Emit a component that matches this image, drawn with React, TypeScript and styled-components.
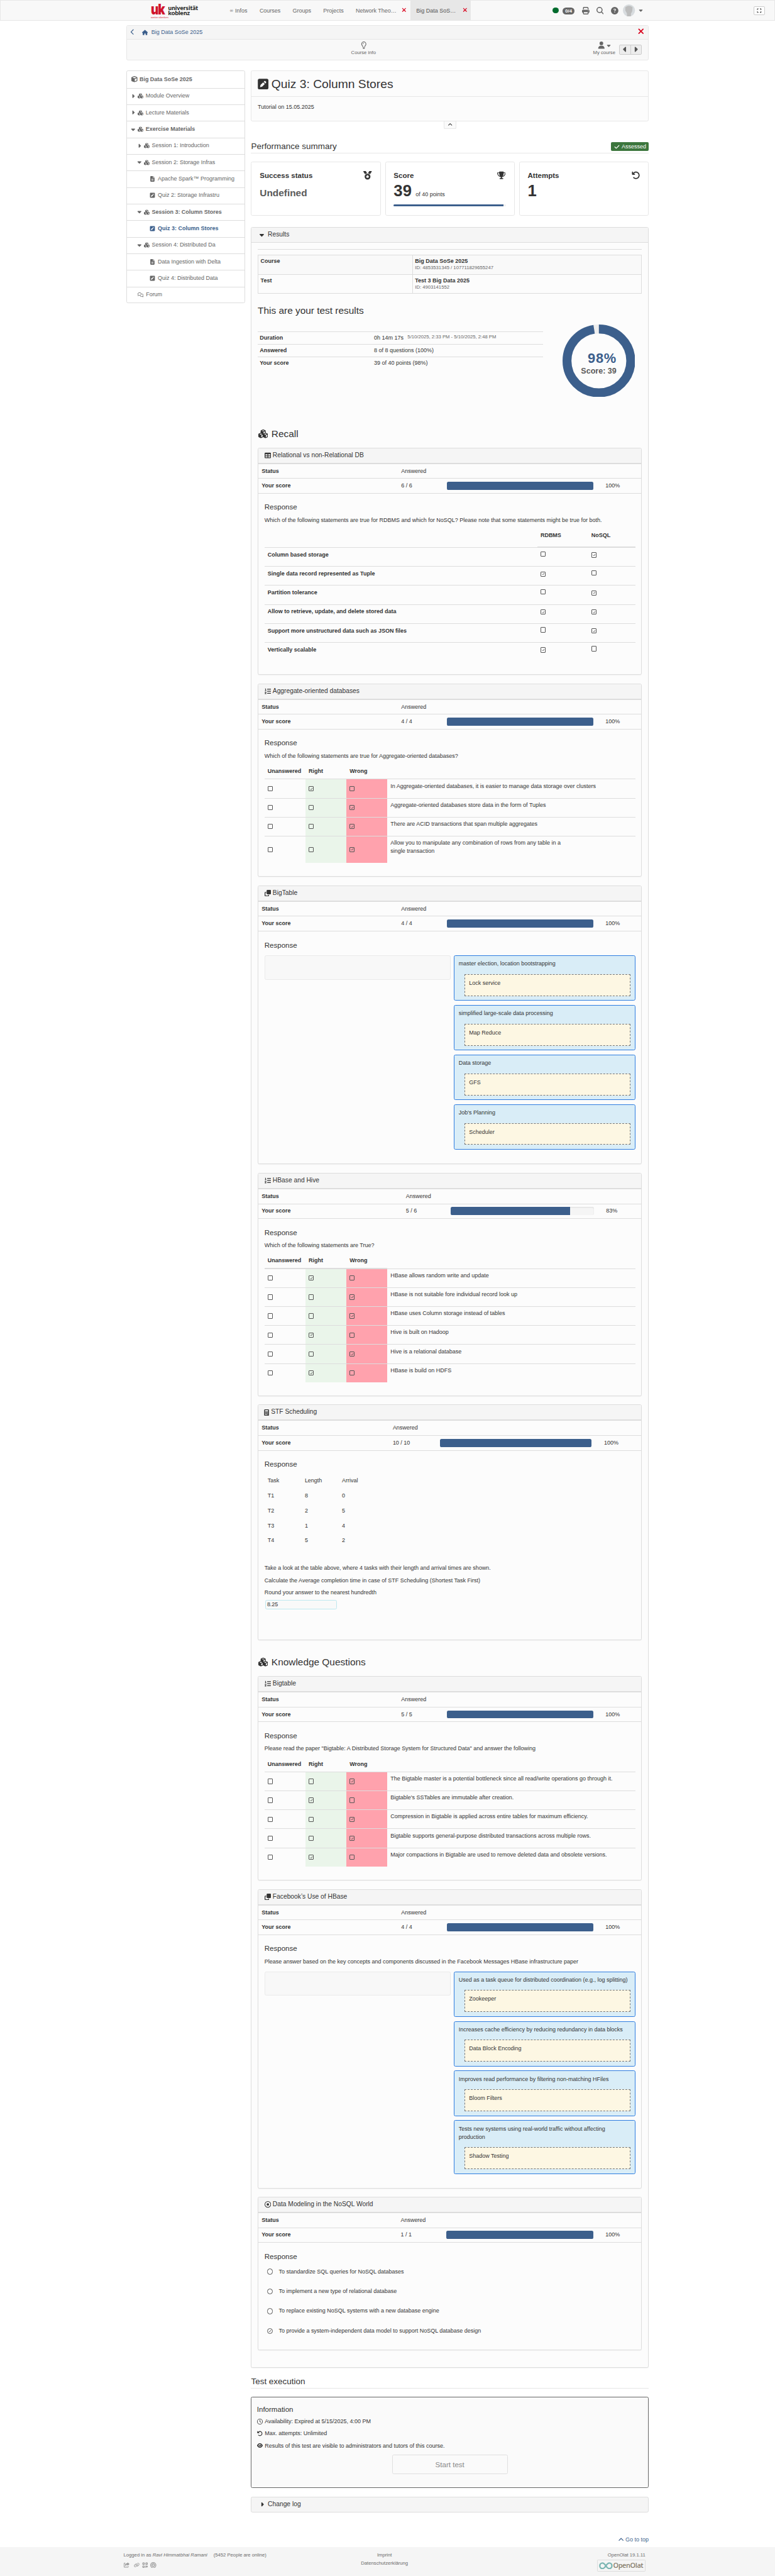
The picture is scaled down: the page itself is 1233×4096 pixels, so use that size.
import React from 'react';
import styled, { createGlobalStyle, css } from 'styled-components';
import {
  FaAngleUp, FaArrowRotateLeft, FaBullseye, FaCalculator, FaCaretDown, FaCaretLeft, FaCaretRight,
  FaCheck, FaChevronLeft, FaCircleQuestion, FaClone, FaCube, FaCubes, FaExpand, FaEye, FaFileLines,
  FaHouse, FaLink, FaListOl, FaMagnifyingGlass, FaMedal, FaPrint, FaQrcode, FaRegCircleDot,
  FaRegClock, FaRegComments, FaRegLightbulb, FaShareFromSquare, FaSquarePen, FaTable, FaTrophy,
  FaUser, FaXmark,
} from 'react-icons/fa6';

/* 1rem stands for ten layout units; every size below is written in rem. */
const Global = createGlobalStyle`
  html { font-size: 6.4219px; }
  *, *::before, *::after { box-sizing: border-box; }
  body {
    margin: 0;
    background: #fff;
    color: #333;
    font: 1.4rem/2rem "Liberation Sans", Arial, sans-serif;
    overflow-x: hidden;
  }
  h1, h2, h3, h4, p { margin: 0; font-weight: 400; }
`;

const c = {
  text: '#333',
  muted: '#666',
  link: '#3c5f8c',
  line: '#ddd',
  soft: '#e7e7e7',
  head: '#f5f5f5',
  red: '#d9001b',
};

const Ico = styled.span<{ $s?: number; $w?: number; $c?: string; $mr?: number }>`
  display: inline-flex;
  flex: none;
  justify-content: center;
  align-items: center;
  width: ${p => (p.$w ?? p.$s ?? 14) / 10}rem;
  margin-right: ${p => (p.$mr ?? 0) / 10}rem;
  color: ${p => p.$c ?? 'inherit'};
  svg { display: block; flex: none; width: auto; height: ${p => (p.$s ?? 14) / 10}rem; }
`;

/* ---------- top bar ---------- */
const Page = styled.div`
  display: flex;
  flex-direction: column;
  min-height: 4096px;
`;
const TopBar = styled.header`
  display: flex;
  flex: none;
  height: 5.2rem;
  background: #f8f8f8;
  border: 1px solid ${c.soft};
`;
const Brand = styled.div`
  display: flex;
  width: 55.3rem;
  padding: 0.9rem 0 0 37.2rem;
`;
const BrandMark = styled.div`
  width: 4.3rem;
  color: #d0142c;
`;
const BrandUk = styled.div`
  height: 2.8rem;
  font: 900 3.6rem/2.7rem Inter, sans-serif;
  letter-spacing: -0.2rem;
  transform: scaleX(0.82);
  transform-origin: left;
`;
const BrandClaim = styled.div`
  font: 400 0.66rem/0.7rem "Open Sans", sans-serif;
  white-space: nowrap;
`;
const BrandName = styled.div`
  padding-top: 0.2rem;
  color: #1d1d1b;
  font: 900 1.55rem/1.25rem Lato, sans-serif;
  white-space: nowrap;
`;
const NavItem = styled.a<{ $w: number; $active?: boolean }>`
  display: flex;
  align-items: center;
  width: ${p => p.$w / 10}rem;
  padding: 0.2rem 1rem 0 1.5rem;
  white-space: nowrap;
  color: ${p => (p.$active ? '#555' : '#666')};
  background: ${p => (p.$active ? c.soft : 'transparent')};
`;
const Infinity = styled.span`
  width: 1.3rem;
  font-size: 1.1rem;
`;
const TabClose = styled.span`
  margin-left: auto;
  color: ${c.red};
`;
const Tools = styled.div`
  display: flex;
  align-items: center;
  margin-left: 20.3rem;
  color: #666;
`;
const Online = styled.span`
  width: 1.45rem;
  height: 1.45rem;
  margin-right: 1rem;
  border-radius: 50%;
  background: #006b2d;
`;
const Count = styled.span`
  width: 2.95rem;
  height: 1.8rem;
  margin: 0.3rem 1.9rem 0 0;
  border-radius: 0.9rem;
  background: #666;
  color: #fff;
  font-size: 1.2rem;
  font-weight: 700;
  line-height: 1.8rem;
  text-align: center;
`;
const Avatar = styled.span`
  width: 3rem;
  height: 3rem;
  margin: 0 0.9rem 0 1.1rem;
  svg { display: block; width: 100%; height: 100%; }
`;
const Expand = styled.button`
  display: flex;
  align-items: center;
  justify-content: center;
  width: 2.7rem;
  height: 2.2rem;
  margin: 1.4rem 2.4rem 0 auto;
  padding: 0;
  border: 1px solid #ccc;
  border-radius: 0.3rem;
  background: #fff;
  color: ${c.text};
`;

/* ---------- breadcrumb and course tools ---------- */
const Container = styled.div`
  width: 129.4rem;
  margin: 1rem 0 0 31.3rem;
`;
const CourseBar = styled.section`
  height: 8.7rem;
  border: 1px solid ${c.soft};
  border-radius: 0.4rem;
  background: #f8f8f8;
`;
const Crumbs = styled.div`
  display: flex;
  align-items: center;
  height: 3.4rem;
  padding: 0 1.1rem 0 0.8rem;
  border-bottom: 1px solid ${c.soft};
  background: ${c.head};
  color: ${c.link};
`;
const CourseTools = styled.div`
  display: grid;
  grid-template-columns: 1fr auto 1fr;
  height: 5.1rem;
  padding-left: 1.1rem;
`;
const Tool = styled.div`
  display: flex;
  flex-direction: column;
  align-items: center;
  grid-column: 2;
  margin-left: -13rem;
  padding-top: 0.6rem;
  color: #666;
  font-size: 1.2rem;
  line-height: 1.8rem;
`;
const MyTools = styled.div`
  display: flex;
  grid-column: 3;
  justify-content: flex-end;
  padding: 0 1.6rem 0 0;
`;
const MyCourse = styled(Tool)`
  margin: 0 1rem 0 0;
`;
const IconPair = styled.span`
  display: flex;
  align-items: center;
  gap: 0.5rem;
`;
const Pager = styled.div`
  display: flex;
  width: 5.5rem;
  height: 2.5rem;
  margin-top: 1.25rem;
  border: 1px solid #ccc;
  border-radius: 0.3rem;
  background: #ededed;
  color: #555;
`;
const PagerHalf = styled.span<{ $split?: boolean }>`
  display: flex;
  flex: 1;
  align-items: center;
  justify-content: center;
  border-left: ${p => (p.$split ? '1px solid #ccc' : '0')};
`;

/* ---------- side menu ---------- */
const Columns = styled.div`
  display: flex;
  gap: 1.5rem;
  margin-top: 2.6rem;
  align-items: flex-start;
`;
const Menu = styled.nav`
  width: 29.4rem;
  height: 57.5rem;
  border: 1px solid ${c.line};
  border-radius: 0.4rem;
  background: #fff;
`;
const MenuRow = styled.a<{ $indent: number; $bold?: boolean; $active?: boolean }>`
  display: flex;
  align-items: center;
  height: 4.1rem;
  padding: 0 0 0.15rem ${p => p.$indent / 10}rem;
  white-space: nowrap;
  color: ${p => (p.$active ? c.link : c.muted)};
  font-weight: ${p => (p.$bold ? 700 : 400)};
  & + & { border-top: 1px solid ${c.line}; }
`;

/* ---------- main column ---------- */
const Main = styled.main`
  width: 98.5rem;
`;
const TitleCard = styled.section`
  height: 12.5rem;
  border: 1px solid ${c.soft};
  border-radius: 0.4rem;
  background: #fcfcfc;
`;
const TitleRow = styled.div`
  display: flex;
  align-items: center;
  height: 6.35rem;
  padding-left: 1.45rem;
  border-bottom: 1px solid ${c.soft};
`;
const Title = styled.h1`
  font-size: 3rem;
  line-height: 3.3rem;
`;
const Intro = styled.p`
  padding: 1.6rem 1.5rem;
`;
const Fold = styled.button`
  display: flex;
  align-items: center;
  justify-content: center;
  width: 3.15rem;
  height: 2rem;
  margin: 0 auto;
  padding: 0;
  border: 1px solid ${c.soft};
  border-top: 0;
  border-radius: 0 0 0.4rem 0.4rem;
  background: #fafafa;
  color: ${c.text};
`;
const SectionHead = styled.div<{ $mt: number }>`
  display: flex;
  justify-content: space-between;
  align-items: flex-start;
  height: 2.9rem;
  margin-top: ${p => p.$mt / 10}rem;
  padding-top: 0.1rem;
  border-bottom: 1px solid ${c.soft};
`;
const SectionTitle = styled.h3`
  font-size: 2.1rem;
  line-height: 2.3rem;
`;
const Assessed = styled.span`
  display: flex;
  align-items: center;
  width: 9.3rem;
  height: 2.2rem;
  margin-top: 0.1rem;
  padding-left: 0.8rem;
  border-radius: 0.3rem;
  background: #3c763d;
  color: #fff;
`;
const Cards = styled.div`
  display: grid;
  grid-template-columns: repeat(3, 1fr);
  gap: 1.05rem;
  margin-top: 2.05rem;
`;
const Card = styled.div`
  height: 13.4rem;
  padding: 1.9rem 2rem 0;
  border: 1px solid ${c.soft};
  border-radius: 0.4rem;
  background: #fff;
`;
const CardHead = styled.div`
  display: flex;
  align-items: center;
  justify-content: space-between;
  height: 2.5rem;
  padding-top: 0.3rem;
  font-size: 1.8rem;
  font-weight: 700;
`;
const CardValue = styled.div<{ $size: number; $c?: string }>`
  display: flex;
  align-items: baseline;
  gap: 1rem;
  height: 4.8rem;
  padding-top: ${p => (4.4 - p.$size * 0.1 * 0.98)}rem;
  color: ${p => p.$c ?? c.text};
  font-size: ${p => p.$size / 10}rem;
  line-height: 1.1;
  font-weight: 700;
`;
const CardUnit = styled.span`
  font-size: 1.4rem;
  font-weight: 400;
`;
const MiniTrack = styled.div`
  height: 0.5rem;
  margin-top: 1.2rem;
  border-radius: 0.3rem;
  background: #f0f0f0;
  overflow: hidden;
`;
const Fill = styled.div`
  height: 100%;
  background: ${c.link};
`;

const Panel = styled.section<{ $h: number; $mt?: number }>`
  height: ${p => p.$h / 10}rem;
  margin-top: ${p => (p.$mt ?? 0) / 10}rem;
  border: 1px solid ${c.line};
  border-radius: 0.4rem;
  background: #fcfcfc;
  box-shadow: 0 1px 1px rgba(0, 0, 0, 0.04);
`;
const PanelHead = styled.h4<{ $inset?: number }>`
  display: flex;
  align-items: center;
  height: 3.75rem;
  padding: 0 ${p => (p.$inset ?? 20) / 10}rem;
  border-bottom: 1px solid ${c.line};
  border-radius: 0.3rem 0.3rem 0 0;
  background: ${c.head};
  font-size: 1.6rem;
`;
const ResultsBody = styled.div`
  padding: 1.49rem 1.5rem 0;
`;
const Rule = styled.div`
  height: 1px;
  background: ${c.line};
`;
const Meta = styled.div`
  height: 9.67rem;
  margin-top: 1.29rem;
  border: 1px solid ${c.line};
`;
const MetaRow = styled.div<{ $shade?: boolean }>`
  display: grid;
  grid-template-columns: 38.1rem 1fr;
  height: 50%;
  background: ${p => (p.$shade ? '#f9f9f9' : '#fcfcfc')};
  & + & { border-top: 1px solid ${c.line}; }
`;
const MetaCell = styled.div<{ $split?: boolean }>`
  display: flex;
  flex-direction: column;
  padding: 0.45rem 0.55rem;
  border-left: ${p => (p.$split ? `1px solid ${c.line}` : '0')};
  font-weight: 700;
  line-height: 1.9rem;
`;
const Small = styled.small`
  color: #666;
  font-size: 1.2rem;
  font-weight: 400;
  line-height: 1.5rem;
`;
const BigHead = styled.h3<{ $mt: number; $mb: number }>`
  display: flex;
  align-items: center;
  height: 2.65rem;
  margin: ${p => p.$mt / 10}rem 0 ${p => p.$mb / 10}rem;
  font-size: 2.4rem;
  line-height: 2.65rem;
`;
const Overview = styled.div`
  display: flex;
  justify-content: space-between;
  height: 18rem;
  padding-right: 1.75rem;
`;
const Facts = styled.div`
  width: 70.7rem;
  padding-top: 1.8rem;
`;
const FactRow = styled.div`
  display: grid;
  grid-template-columns: 28.3rem 1fr;
  height: 3.1rem;
  padding: 0.45rem 0.5rem;
  border-top: 1px solid ${c.line};
`;
const FactTime = styled(Small)`
  margin-left: 1rem;
  line-height: 1rem;
  vertical-align: 0.25rem;
`;
const Donut = styled.svg`
  width: 18rem;
  height: 18rem;
  font-family: "Liberation Sans", Arial, sans-serif;
`;

/* ---------- question panels ---------- */
const ScoreRow = styled.div<{ $col: number; $bar: number; $pct: number; $last?: boolean }>`
  display: grid;
  grid-template-columns: ${p => p.$col / 10}rem ${p => (p.$bar - p.$col) / 10}rem ${p => (p.$pct - p.$bar) / 10}rem 1fr;
  align-items: center;
  height: 3.7rem;
  padding: 0 0 0 0.8rem;
  border-top: 1px solid ${c.line};
  ${p => p.$last && css`
    height: 3.8rem;
    border-bottom: 1px solid ${c.line};
  `}
`;
const Track = styled.div<{ $w: number }>`
  width: ${p => p.$w / 10}rem;
  height: 2rem;
  border-radius: 0.4rem;
  background: #f5f5f5;
  box-shadow: inset 0 1px 2px rgba(0, 0, 0, 0.1);
  overflow: hidden;
`;
const Answer = styled.div`
  padding: 2.45rem 1.5rem 0;
`;
const AnswerTitle = styled.h4`
  height: 2rem;
  margin-bottom: 1.15rem;
  font-size: 1.8rem;
`;
const Prompt = styled.p`
  height: 2rem;
  margin-bottom: 1rem;
  white-space: nowrap;
`;
const MatrixRow = styled.div<{ $head?: boolean }>`
  display: grid;
  grid-template-columns: 67.6rem 12.6rem 1fr;
  height: 4.7rem;
  font-weight: 700;
  border-top: ${p => (p.$head ? '0' : `1px solid ${c.line}`)};
`;
const MatrixCell = styled.div<{ $thick?: boolean }>`
  padding: 0.75rem 0.8rem;
  border-bottom: ${p => (p.$thick ? `1px solid ${c.line}` : '0')};
`;
const KprimHead = styled.div`
  display: grid;
  grid-template-columns: repeat(3, 10.15rem) 1fr;
  height: 3.65rem;
  font-weight: 700;
`;
const KprimHeadCell = styled.div`
  padding: 0.8rem;
  border-bottom: 1px solid ${c.line};
`;
const KprimRow = styled.div<{ $tall?: boolean }>`
  display: grid;
  grid-template-columns: repeat(3, 10.15rem) 1fr;
  height: ${p => (p.$tall ? 6.7 : 4.7)}rem;
  border-top: 1px solid ${c.line};
`;
const KprimCell = styled.div<{ $bg?: string }>`
  display: flex;
  align-items: center;
  padding-left: 0.8rem;
  background: ${p => p.$bg ?? 'transparent'};
`;
const KprimText = styled.div`
  padding: 0.65rem 0.8rem;
  white-space: pre-line;
`;
const BoxMark = styled.span<{ $round?: boolean }>`
  display: inline-flex;
  flex: none;
  align-items: center;
  justify-content: center;
  width: ${p => (p.$round ? 1.45 : 1.3)}rem;
  height: ${p => (p.$round ? 1.45 : 1.3)}rem;
  border: 1px solid #555;
  border-radius: ${p => (p.$round ? '50%' : '1px')};
  color: #444;
  svg { display: block; width: 0.75rem; height: 0.75rem; }
`;
const Match = styled.div<{ $mt: number }>`
  display: flex;
  justify-content: space-between;
  align-items: flex-start;
  margin-top: ${p => p.$mt / 10}rem;
`;
const Source = styled.div`
  width: 46.1rem;
  height: 6rem;
  border: 1px solid #eaeaea;
  border-radius: 0.4rem;
  background: #f8f8f8;
`;
const Targets = styled.div`
  display: flex;
  flex-direction: column;
  gap: 1.05rem;
  width: 44.9rem;
`;
const Target = styled.div<{ $tall?: boolean }>`
  height: ${p => (p.$tall ? 13.25 : 11.25)}rem;
  padding: 1rem 1rem 0 1rem;
  border: 0.2rem solid #2e7de0;
  border-radius: 0.4rem;
  background: #d9edf7;
  white-space: pre-line;
`;
const Dropped = styled.div`
  height: 5.4rem;
  margin: 1.5rem 0 0 1.5rem;
  padding: 1.05rem 0.9rem;
  border: 0.2rem dashed #777;
  background: #fdf7e3;
`;
const Grid3 = styled.div`
  display: grid;
  grid-template-columns: repeat(3, 9.2rem);
  grid-auto-rows: 3.72rem;
  margin-bottom: 3.15rem;
  padding: 0.85rem 0 0 0.8rem;
`;
const Line = styled.p`
  height: 3rem;
`;
const Field = styled.div`
  width: 17.8rem;
  height: 2.4rem;
  margin: -0.2rem 0 0 0.2rem;
  padding-left: 0.3rem;
  border: 1px solid #bfe8ef;
  border-radius: 0.4rem;
  background: #f9f9f9;
`;
const Options = styled.div`
  padding-top: 0.55rem;
`;
const Option = styled.div`
  display: flex;
  align-items: center;
  gap: 1.45rem;
  height: 2rem;
  margin-bottom: 2.9rem;
  padding-left: 0.65rem;
`;

/* ---------- execution, log, footer ---------- */
const InfoBox = styled.section`
  height: 22.65rem;
  margin-top: 2.05rem;
  padding: 2rem 1.3rem;
  border: 1px solid #666;
  border-radius: 0.4rem;
  background: #fafafa;
`;
const InfoTitle = styled.h4`
  height: 3rem;
  font-size: 1.8rem;
`;
const InfoLine = styled.p`
  display: flex;
  align-items: center;
  height: 2rem;
  margin-bottom: 1rem;
`;
const Start = styled.button`
  display: block;
  width: 28.7rem;
  height: 4.8rem;
  margin: 1.2rem auto 0;
  border: 1px solid #e0e0e0;
  border-radius: 0.4rem;
  background: #fafafa;
  color: #888;
  font: 1.8rem "Liberation Sans", Arial, sans-serif;
`;
const ChangeLog = styled.section`
  display: flex;
  align-items: center;
  height: 4rem;
  margin-top: 2.05rem;
  padding-left: 2.1rem;
  border: 1px solid ${c.line};
  border-radius: 0.4rem;
  background: ${c.head};
  font-size: 1.6rem;
`;
const GoTop = styled.a`
  display: flex;
  align-items: center;
  justify-content: flex-end;
  height: 2rem;
  margin: 5.7rem 0 0.9rem;
  color: ${c.link};
`;
const Footer = styled.footer`
  display: grid;
  grid-template-columns: 1fr auto 1fr;
  flex: 1;
  padding: 0.9rem 32.1rem 0 30.6rem;
  background: ${c.head};
  color: #6b6b6b;
  font-size: 1.2rem;
`;
const FootRight = styled.div`
  display: flex;
  flex-direction: column;
  align-items: flex-end;
  padding-top: 0.1rem;
`;
const FootMid = styled.div`
  padding-top: 0.2rem;
  text-align: center;
`;
const FootLeft = styled.div`
  padding-top: 0.2rem;
  em { margin-right: 1.2rem; }
`;
const Social = styled.div`
  display: flex;
  align-items: center;
  height: 1.8rem;
  margin-top: 0.4rem;
  color: #999;
`;
const OlatLogo = styled.span`
  display: flex;
  align-items: center;
  justify-content: space-between;
  width: 12rem;
  height: 3rem;
  padding: 0 0.4rem;
  border: 1px solid ${c.line};
  border-radius: 0.2rem;
  color: #857c6b;
  font: 600 1.7rem/2.8rem "Open Sans", sans-serif;
  letter-spacing: -0.06rem;
  svg { width: 3.4rem; height: 1.8rem; }
`;

/* ---------- pieces ---------- */
const Check = () => (
  <svg viewBox="0 0 10 10"><path d="M1.5 5.5 4 8 8.7 1.8" fill="none" stroke="currentColor" strokeWidth="1.7" /></svg>
);
const Box = ({ on, round }: { on?: boolean; round?: boolean }) => (
  <BoxMark $round={round}>{on && <Check />}</BoxMark>
);

type QProps = {
  icon: React.ReactNode;
  iconW?: number;
  title: string;
  score: string;
  pct?: number;
  h: number;
  mt?: number;
  cols?: [number, number, number];
  barW?: number;
  children: React.ReactNode;
};
const Question = ({ icon, iconW = 16, title, score, pct = 100, h, mt = 20.8, cols = [346, 459, 852], barW = 363, children }: QProps) => (
  <Panel $h={h} $mt={mt}>
    <PanelHead $inset={15}>
      <Ico $s={16} $w={iconW} $mr={4.5}>{icon}</Ico>{title}
    </PanelHead>
    <ScoreRow $col={cols[0]} $bar={cols[1]} $pct={cols[2]}>
      <b>Status</b><span>Answered</span>
    </ScoreRow>
    <ScoreRow $col={cols[0]} $bar={cols[1]} $pct={cols[2]} $last>
      <b>Your score</b><span>{score}</span>
      <Track $w={barW}><Fill style={{ width: `${pct}%` }} /></Track>
      <span>{pct}%</span>
    </ScoreRow>
    <Answer>
      <AnswerTitle>Response</AnswerTitle>
      {children}
    </Answer>
  </Panel>
);

const Kprim = ({ rows }: { rows: [string, 'r' | 'w'][] }) => (
  <>
    <KprimHead>
      <KprimHeadCell>Unanswered</KprimHeadCell>
      <KprimHeadCell>Right</KprimHeadCell>
      <KprimHeadCell>Wrong</KprimHeadCell>
    </KprimHead>
    {rows.map(([text, v]) => (
      <KprimRow key={text} $tall={text.includes('\n')}>
        <KprimCell><Box /></KprimCell>
        <KprimCell $bg="#eaf5ea"><Box on={v === 'r'} /></KprimCell>
        <KprimCell $bg="#ffa2ad"><Box on={v === 'w'} /></KprimCell>
        <KprimText>{text}</KprimText>
      </KprimRow>
    ))}
  </>
);

const Matching = ({ items, mt }: { items: [string, string][]; mt: number }) => (
  <Match $mt={mt}>
    <Source />
    <Targets>
      {items.map(([label, drop]) => (
        <Target key={label} $tall={label.includes('\n')}>
          {label}
          <Dropped>{drop}</Dropped>
        </Target>
      ))}
    </Targets>
  </Match>
);

const menu: { text: string; level: number; open?: boolean; icon?: 'file' | 'pen'; bold?: boolean; active?: boolean }[] = [
  { text: 'Module Overview', level: 0, open: false },
  { text: 'Lecture Materials', level: 0, open: false },
  { text: 'Exercise Materials', level: 0, open: true, bold: true },
  { text: 'Session 1: Introduction', level: 1, open: false },
  { text: 'Session 2: Storage Infras', level: 1, open: true },
  { text: 'Apache Spark™ Programming', level: 2, icon: 'file' },
  { text: 'Quiz 2: Storage Infrastru', level: 2, icon: 'pen' },
  { text: 'Session 3: Column Stores', level: 1, open: true, bold: true },
  { text: 'Quiz 3: Column Stores', level: 2, icon: 'pen', bold: true, active: true },
  { text: 'Session 4: Distributed Da', level: 1, open: true },
  { text: 'Data Ingestion with Delta', level: 2, icon: 'file' },
  { text: 'Quiz 4: Distributed Data', level: 2, icon: 'pen' },
];

const matrix: [string, boolean, boolean][] = [
  ['Column based storage', false, true],
  ['Single data record represented as Tuple', true, false],
  ['Partition tolerance', false, true],
  ['Allow to retrieve, update, and delete stored data', true, true],
  ['Support more unstructured data such as JSON files', false, true],
  ['Vertically scalable', true, false],
];

export default function App() {
  return (
    <Page>
      <Global />
      <TopBar>
        <Brand>
          <BrandMark><BrandUk>uk</BrandUk><BrandClaim>weiter:denken</BrandClaim></BrandMark>
          <BrandName>universität<br />koblenz</BrandName>
        </Brand>
        <NavItem $w={73.4}><Infinity>∞</Infinity>Infos</NavItem>
        <NavItem $w={82}>Courses</NavItem>
        <NavItem $w={76}>Groups</NavItem>
        <NavItem $w={80.5}>Projects</NavItem>
        <NavItem $w={150}>Network Theo…<TabClose><Ico $s={15} $w={10}><FaXmark /></Ico></TabClose></NavItem>
        <NavItem $w={150} $active>Big Data SoS…<TabClose><Ico $s={15} $w={10}><FaXmark /></Ico></TabClose></NavItem>
        <Tools>
          <Online />
          <Count>0/4</Count>
          <Ico $s={18.5} $w={19} $mr={15.5}><FaPrint /></Ico>
          <Ico $s={18.5} $w={19} $mr={18}><FaMagnifyingGlass /></Ico>
          <Ico $s={18.5} $w={19}><FaCircleQuestion /></Ico>
          <Avatar>
            <svg viewBox="0 0 30 30">
              <circle cx="15" cy="15" r="15" fill="#d8dcdf" />
              <path d="M6 7Q15 0 24 7L23 17Q22 20 20 22V29Q15 31 10 29V22L6 15Z" fill="#bdbdbd" />
            </svg>
          </Avatar>
          <Ico $s={14} $w={9}><FaCaretDown /></Ico>
        </Tools>
        <Expand><Ico $s={12}><FaExpand /></Ico></Expand>
      </TopBar>

      <Container>
        <CourseBar>
          <Crumbs>
            <Ico $s={15} $w={10} $mr={18}><FaChevronLeft /></Ico>
            <Ico $s={14.5} $w={17} $mr={7.5}><FaHouse /></Ico>
            Big Data SoSe 2025
            <TabClose><Ico $s={21} $w={14}><FaXmark /></Ico></TabClose>
          </Crumbs>
          <CourseTools>
            <Tool><Ico $s={18}><FaRegLightbulb /></Ico>Course info</Tool>
            <MyTools>
              <MyCourse>
                <IconPair><Ico $s={18} $w={16.5}><FaUser /></Ico><Ico $s={14} $w={9}><FaCaretDown /></Ico></IconPair>
                My course
              </MyCourse>
              <Pager>
                <PagerHalf><Ico $s={20} $w={9}><FaCaretLeft /></Ico></PagerHalf>
                <PagerHalf $split><Ico $s={20} $w={9}><FaCaretRight /></Ico></PagerHalf>
              </Pager>
            </MyTools>
          </CourseTools>
        </CourseBar>

        <Columns>
          <Menu>
            <MenuRow $indent={11} $bold><Ico $s={15} $w={15} $mr={5}><FaCube /></Ico>Big Data SoSe 2025</MenuRow>
            {menu.map(m => (
              <MenuRow key={m.text} $indent={m.level === 2 ? 57 : 11 + m.level * 15} $bold={m.bold} $active={m.active}>
                {m.icon ? (
                  <Ico $s={14} $w={13} $mr={6.5}>{m.icon === 'file' ? <FaFileLines /> : <FaSquarePen />}</Ico>
                ) : (
                  <>
                    <Ico $s={15} $w={9} $mr={6}>{m.open ? <FaCaretDown /> : <FaCaretRight />}</Ico>
                    <Ico $s={14} $w={16} $mr={4.5}><FaCubes /></Ico>
                  </>
                )}
                {m.text}
              </MenuRow>
            ))}
            <MenuRow $indent={24.5}><Ico $s={14.5} $w={18} $mr={4.5}><FaRegComments /></Ico>Forum</MenuRow>
          </Menu>

          <Main>
            <TitleCard>
              <TitleRow><Ico $s={30} $w={26.5} $mr={8}><FaSquarePen /></Ico><Title>Quiz 3: Column Stores</Title></TitleRow>
              <Intro>Tutorial on 15.05.2025</Intro>
            </TitleCard>
            <Fold><Ico $s={13}><FaAngleUp /></Ico></Fold>

            <SectionHead $mt={30.5}>
              <SectionTitle>Performance summary</SectionTitle>
              <Assessed><Ico $s={14} $w={13} $mr={5}><FaCheck /></Ico>Assessed</Assessed>
            </SectionHead>
            <Cards>
              <Card>
                <CardHead>Success status<Ico $s={21}><FaMedal /></Ico></CardHead>
                <CardValue $size={24} $c="#5a5a5a">Undefined</CardValue>
              </Card>
              <Card>
                <CardHead>Score<Ico $s={21} $w={24}><FaTrophy /></Ico></CardHead>
                <CardValue $size={40}>39<CardUnit>of 40 points</CardUnit></CardValue>
                <MiniTrack><Fill style={{ width: '98%' }} /></MiniTrack>
              </Card>
              <Card>
                <CardHead>Attempts<Ico $s={21}><FaArrowRotateLeft /></Ico></CardHead>
                <CardValue $size={40}>1</CardValue>
              </Card>
            </Cards>

            <Panel $h={5300.3} $mt={28.6}>
              <PanelHead><Ico $s={17} $w={11} $mr={9}><FaCaretDown /></Ico>Results</PanelHead>
              <ResultsBody>
                <Rule />
                <Meta>
                  <MetaRow $shade>
                    <MetaCell>Course</MetaCell>
                    <MetaCell $split>Big Data SoSe 2025<Small>ID: 4853531345 / 107711829655247</Small></MetaCell>
                  </MetaRow>
                  <MetaRow>
                    <MetaCell>Test</MetaCell>
                    <MetaCell $split>Test 3 Big Data 2025<Small>ID: 4903141552</Small></MetaCell>
                  </MetaRow>
                </Meta>
                <BigHead $mt={27.3} $mb={21.5}>This are your test results</BigHead>
                <Overview>
                  <Facts>
                    <FactRow><b>Duration</b><span>0h 14m 17s<FactTime>5/10/2025, 2:33 PM - 5/10/2025, 2:48 PM</FactTime></span></FactRow>
                    <FactRow><b>Answered</b><span>8 of 8 questions (100%)</span></FactRow>
                    <FactRow><b>Your score</b><span>39 of 40 points (98%)</span></FactRow>
                  </Facts>
                  <Donut viewBox="0 0 180 180">
                    <circle cx="90" cy="90" r="79" fill="none" stroke="#eee" strokeWidth="22" />
                    <circle cx="90" cy="90" r="79" fill="none" stroke={c.link} strokeWidth="22" pathLength="100" strokeDasharray="97.6 2.4" transform="rotate(-90 90 90)" />
                    <text x="134" y="95.5" textAnchor="end" fontSize="34" letterSpacing="1.2" fontWeight="700" fill={c.link}>98%</text>
                    <text x="133.5" y="121.5" textAnchor="end" fontSize="19.5" fontWeight="700" fill="#5a5a5a">Score: 39</text>
                  </Donut>
                </Overview>

                <BigHead $mt={77.4} $mb={21.2}><Ico $s={24} $w={27} $mr={7}><FaCubes /></Ico>Recall</BigHead>

                <Question icon={<FaTable />} title="Relational vs non-Relational DB" score="6 / 6" h={563.2} mt={0}>
                  <Prompt>Which of the following statements are true for RDBMS and which for NoSQL? Please note that some statements might be true for both.</Prompt>
                  <MatrixRow $head>
                    <span />
                    <MatrixCell $thick>RDBMS</MatrixCell>
                    <MatrixCell $thick>NoSQL</MatrixCell>
                  </MatrixRow>
                  {matrix.map(([text, a, b]) => (
                    <MatrixRow key={text}>
                      <MatrixCell>{text}</MatrixCell>
                      <MatrixCell><Box on={a} /></MatrixCell>
                      <MatrixCell><Box on={b} /></MatrixCell>
                    </MatrixRow>
                  ))}
                </Question>

                <Question icon={<FaListOl />} title="Aggregate-oriented databases" score="4 / 4" h={479.2}>
                  <Prompt>Which of the following statements are true for Aggregate-oriented databases?</Prompt>
                  <Kprim rows={[
                    ['In Aggregate-oriented databases, it is easier to manage data storage over clusters', 'r'],
                    ['Aggregate-oriented databases store data in the form of Tuples', 'w'],
                    ['There are ACID transactions that span multiple aggregates', 'w'],
                    ['Allow you to manipulate any combination of rows from any table in a\nsingle transaction', 'w'],
                  ]} />
                </Question>

                <Question icon={<FaClone />} title="BigTable" score="4 / 4" h={691.2}>
                  <Matching mt={15} items={[
                    ['master election, location bootstrapping', 'Lock service'],
                    ['simplified large-scale data processing', 'Map Reduce'],
                    ['Data storage', 'GFS'],
                    ["Job's Planning", 'Scheduler'],
                  ]} />
                </Question>

                <Question icon={<FaListOl />} title="HBase and Hive" score="5 / 6" pct={83} h={553} cols={[357.5, 469, 853.5]} barW={355}>
                  <Prompt>Which of the following statements are True?</Prompt>
                  <Kprim rows={[
                    ['HBase allows random write and update', 'r'],
                    ['HBase is not suitable fore individual record look up', 'w'],
                    ['HBase uses Column storage instead of tables', 'w'],
                    ['Hive is built on Hadoop', 'r'],
                    ['Hive is a relational database', 'w'],
                    ['HBase is build on HDFS', 'r'],
                  ]} />
                </Question>

                <Question icon={<FaCalculator />} iconW={12} title="STF Scheduling" score="10 / 10" h={584.2} cols={[325, 442, 848.5]} barW={376}>
                  <Grid3>
                    {['Task', 'Length', 'Arrival', 'T1', '8', '0', 'T2', '2', '5', 'T3', '1', '4', 'T4', '5', '2'].map((t, i) => (
                      <span key={i}>{t}</span>
                    ))}
                  </Grid3>
                  <Line>Take a look at the table above, where 4 tasks with their length and arrival times are shown.</Line>
                  <Line>Calculate the Average completion time in case of STF Scheduling (Shortest Task First)</Line>
                  <Line>Round your answer to the nearest hundredth</Line>
                  <Field>8.25</Field>
                </Question>

                <BigHead $mt={40.3} $mb={21.3}><Ico $s={24} $w={27} $mr={7}><FaCubes /></Ico>Knowledge Questions</BigHead>

                <Question icon={<FaListOl />} title="Bigtable" score="5 / 5" h={506.4} mt={0}>
                  <Prompt>Please read the paper "Bigtable: A Distributed Storage System for Structured Data" and answer the following</Prompt>
                  <Kprim rows={[
                    ['The Bigtable master is a potential bottleneck since all read/write operations go through it.', 'w'],
                    ["Bigtable's SSTables are immutable after creation.", 'r'],
                    ['Compression in Bigtable is applied across entire tables for maximum efficiency.', 'w'],
                    ['Bigtable supports general-purpose distributed transactions across multiple rows.', 'w'],
                    ['Major compactions in Bigtable are used to remove deleted data and obsolete versions.', 'r'],
                  ]} />
                </Question>

                <Question icon={<FaClone />} title="Facebook’s Use of HBase" score="4 / 4" h={741.2}>
                  <Prompt>Please answer based on the key concepts and components discussed in the Facebook Messages HBase infrastructure paper</Prompt>
                  <Matching mt={14} items={[
                    ['Used as a task queue for distributed coordination (e.g., log splitting)', 'Zookeeper'],
                    ['Increases cache efficiency by reducing redundancy in data blocks', 'Data Block Encoding'],
                    ['Improves read performance by filtering non-matching HFiles', 'Bloom Filters'],
                    ['Tests new systems using real-world traffic without affecting\nproduction', 'Shadow Testing'],
                  ]} />
                </Question>

                <Question icon={<FaRegCircleDot />} title="Data Modeling in the NoSQL World" score="1 / 1" h={380} cols={[344.5, 457.5, 852]} barW={364.5}>
                  <Options>
                    <Option><Box round />To standardize SQL queries for NoSQL databases</Option>
                    <Option><Box round />To implement a new type of relational database</Option>
                    <Option><Box round />To replace existing NoSQL systems with a new database engine</Option>
                    <Option><Box round on />To provide a system-independent data model to support NoSQL database design</Option>
                  </Options>
                </Question>
              </ResultsBody>
            </Panel>

            <SectionHead $mt={22}><SectionTitle>Test execution</SectionTitle></SectionHead>
            <InfoBox>
              <InfoTitle>Information</InfoTitle>
              <InfoLine><Ico $s={14} $w={15} $mr={4.5}><FaRegClock /></Ico>Availability: Expired at 5/15/2025, 4:00 PM</InfoLine>
              <InfoLine><Ico $s={14} $w={15} $mr={4.5}><FaArrowRotateLeft /></Ico>Max. attempts: Unlimited</InfoLine>
              <InfoLine><Ico $s={14} $w={15} $mr={4.5}><FaEye /></Ico>Results of this test are visible to administrators and tutors of this course.</InfoLine>
              <Start>Start test</Start>
            </InfoBox>
            <ChangeLog><Ico $s={16} $w={10} $mr={9}><FaCaretRight /></Ico>Change log</ChangeLog>
            <GoTop><Ico $s={16} $w={14} $mr={4}><FaAngleUp /></Ico>Go to top</GoTop>
          </Main>
        </Columns>
      </Container>

      <Footer>
        <FootLeft>
          Logged in as <em>Ravi Himmatbhai Ramani</em> (5452 People are online)
          <Social>
            <Ico $s={14} $w={16} $mr={8}><FaShareFromSquare /></Ico>
            <Ico $s={14} $w={17} $mr={6}><FaLink /></Ico>
            <Ico $s={15} $w={14} $mr={6}><FaQrcode /></Ico>
            <Ico $s={15} $w={15}><FaBullseye /></Ico>
          </Social>
        </FootLeft>
        <FootMid>Imprint<br />Datenschutzerklärung</FootMid>
        <FootRight>
          OpenOlat 19.1.11
          <OlatLogo>
            <svg viewBox="0 0 34 18">
              <path d="M17 9C13 3 11 2 8.5 2A6.5 7 0 0 0 8.5 16C11 16 13 15 17 9C21 3 23 2 25.5 2A6.5 7 0 0 1 25.5 16C23 16 21 15 17 9Z" fill="none" stroke="#7cb6b3" strokeWidth="3.6" />
            </svg>
            OpenOlat
          </OlatLogo>
        </FootRight>
      </Footer>
    </Page>
  );
}
